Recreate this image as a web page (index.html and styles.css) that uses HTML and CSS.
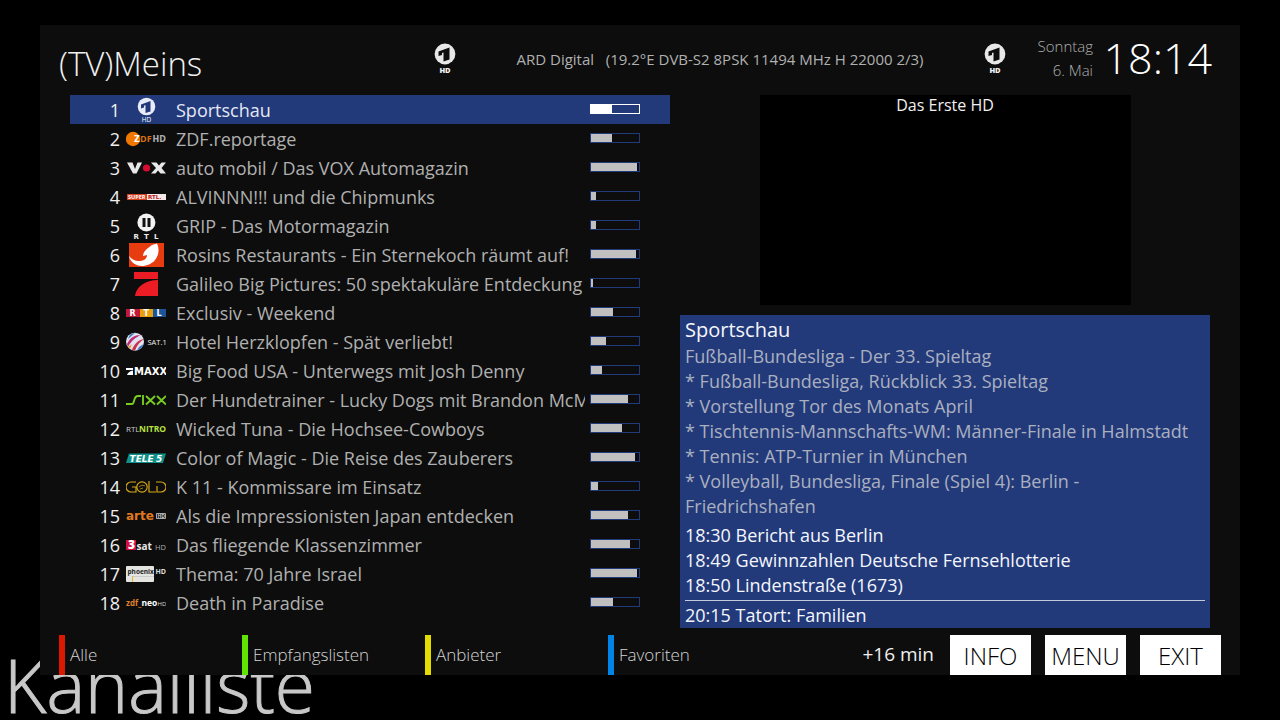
FILE: index.html
```html
<!DOCTYPE html>
<html lang="de">
<head>
<meta charset="utf-8">
<title>Kanalliste</title>
<link rel="stylesheet" href="styles.css">
</head>
<body>
<h1 class="backdrop-title">Kanalliste</h1>
<div class="screen">
  <header class="topbar">
    <h2 class="bouquet">(TV)Meins</h2>
    <svg class="station" viewBox="0 0 22 32" aria-hidden="true"><circle cx="11" cy="11" r="10.4" fill="#e8e8e8"/><path d="M4.500 8.500L15.500 4.500V16.500L9.500 18.500V9.500L8 10V12L4.500 13Z" fill="#0d0d0d"/><text x="11" y="29.500" text-anchor="middle" class="lt x" font-size="7.500" fill="#f0f0f0">HD</text></svg>
    <p class="tuner">ARD Digital &nbsp; (19.2°E DVB-S2 8PSK 11494 MHz H 22000 2/3)</p>
    <svg class="station" viewBox="0 0 22 32" aria-hidden="true"><circle cx="11" cy="11" r="10.4" fill="#e8e8e8"/><path d="M4.500 8.500L15.500 4.500V16.500L9.500 18.500V9.500L8 10V12L4.500 13Z" fill="#0d0d0d"/><text x="11" y="29.500" text-anchor="middle" class="lt x" font-size="7.500" fill="#f0f0f0">HD</text></svg>
    <p class="date">Sonntag<br>6. Mai</p>
    <time class="clock">18:14</time>
  </header>

  <main class="content">
    <ol class="channels">
      <li class="channel selected"><span class="num">1</span>
        <svg class="logo" viewBox="0 0 40 29"><circle cx="20.500" cy="11.500" r="8.800" fill="#e8ecf8"/><path d="M15 9.500L24.500 6V16.500L19.500 18V10L18 10.700V12.500L15 13.500Z" fill="#233a7a"/><text x="20.500" y="27" text-anchor="middle" class="lt" font-size="6.500" fill="#fff">HD</text></svg>
        <span class="name">Sportschau</span><span class="bar"><i style="width:44%"></i></span></li>
      <li class="channel"><span class="num">2</span>
        <svg class="logo" viewBox="0 0 40 29"><circle cx="7" cy="15" r="7.200" fill="#f07800"/><text x="8" y="18" class="wide" font-size="8" fill="#fff">Z</text><text x="14" y="18" class="lt b" font-size="9" fill="#d87010">DF</text><text x="26.500" y="18" class="wide" font-size="8" fill="#aaa">HD</text></svg>
        <span class="name">ZDF.reportage</span><span class="bar"><i style="width:44%"></i></span></li>
      <li class="channel"><span class="num">3</span>
        <svg class="logo" viewBox="0 0 40 29"><path d="M1 9.500H6.500L9 16L11.500 9.500H16L10.500 20.500H7Z" fill="#e8e8e8"/><circle cx="20.500" cy="15" r="3.600" fill="#d80c30"/><path d="M25 9.500H30.500L33 12.500L35.500 9.500H40L35.500 15L40 20.500H34.500L32 17.500L29.500 20.500H25L30 15Z" fill="#e8e8e8"/></svg>
        <span class="name">auto mobil / Das VOX Automagazin</span><span class="bar"><i style="width:96%"></i></span></li>
      <li class="channel"><span class="num">4</span>
        <svg class="logo" viewBox="0 0 40 29"><path d="M1 12H21V18H1Z" fill="#d84020"/><path d="M21 12H40V18H21Z" fill="#f4e8e8"/><text x="2" y="17" class="lt b" font-size="5.500" fill="#fff">SUPER</text><text x="22" y="17" class="wide" font-size="5.500" fill="#c01820">RTL.</text></svg>
        <span class="name">ALVINNN!!! und die Chipmunks</span><span class="bar"><i style="width:11%"></i></span></li>
      <li class="channel"><span class="num">5</span>
        <svg class="logo" viewBox="0 0 40 29"><circle cx="20.400" cy="11.500" r="9" fill="#f2f2f2"/><path d="M16.500 7H19.500V16H16.500ZM21.500 7H24.500V16H21.500Z" fill="#111"/><g class="wide" font-size="7" fill="#eee"><text x="7.500" y="28">R</text><text x="18" y="28">T</text><text x="28" y="28">L</text></g></svg>
        <span class="name">GRIP - Das Motormagazin</span><span class="bar"><i style="width:11%"></i></span></li>
      <li class="channel"><span class="num">6</span>
        <svg class="logo" viewBox="0 0 40 29"><path d="M3 3H38V27H3Z" fill="#e63c10"/><path d="M3 16C6 20 10 21.500 14 21C19 20.500 21 18 21 15L17 16C17 13 19 10 22 8L26 5L31 3.500C33.500 9 33 15 29 20C25 25 18 27 12 25.500C7 24 4 20.500 3 16Z" fill="#fff"/></svg>
        <span class="name">Rosins Restaurants - Ein Sternekoch räumt auf!</span><span class="bar"><i style="width:94%"></i></span></li>
      <li class="channel"><span class="num">7</span>
        <svg class="logo" viewBox="0 0 40 29"><path d="M8 3H32V10H8ZM32 11V27H9C10 18 19 11 32 11Z" fill="#ec1c24"/></svg>
        <span class="name">Galileo Big Pictures: 50 spektakuläre Entdeckung</span><span class="bar"><i style="width:4%"></i></span></li>
      <li class="channel"><span class="num">8</span>
        <svg class="logo" viewBox="0 0 40 29"><path d="M0 11H14V19H0Z" fill="#c01838"/><path d="M14 11H27V19H14Z" fill="#e8a010"/><path d="M27 11H40V19H27Z" fill="#1c5498"/><g class="wide" font-size="8" fill="#fff"><text x="3.500" y="18">R</text><text x="17.500" y="18">T</text><text x="30.500" y="18">L</text></g></svg>
        <span class="name">Exclusiv - Weekend</span><span class="bar"><i style="width:46%"></i></span></li>
      <li class="channel"><span class="num">9</span>
        <svg class="logo" viewBox="0 0 40 29"><circle cx="9" cy="14.700" r="9" fill="#dfe4ee"/><path d="M1 17C4 11 8 8 15 8C10 10 5 14 2 20Z" fill="#c02878"/><path d="M6 23C8 17 12 13 18 12C14 15 11 18 9 23.500Z" fill="#d03050"/><path d="M4 7.500L9 6L2 12ZM13 20L17.500 17C16 21 14 22 11 23.500Z" fill="#3c78c0"/><path d="M2 20L6 17L4 22Z" fill="#e8a030"/><text x="21.500" y="18" class="lt" font-size="7.500" fill="#eee">SAT.1</text></svg>
        <span class="name">Hotel Herzklopfen - Spät verliebt!</span><span class="bar"><i style="width:31%"></i></span></li>
      <li class="channel"><span class="num">10</span>
        <svg class="logo" viewBox="0 0 40 29"><path d="M0 12H7V14H0ZM7 14.500V19H1C2 16.500 4 15 7 14.500Z" fill="#fff"/><text x="8" y="19" class="wide" font-size="10" fill="#fff">MAXX</text></svg>
        <span class="name">Big Food USA - Unterwegs mit Josh Denny</span><span class="bar"><i style="width:23%"></i></span></li>
      <li class="channel"><span class="num">11</span>
        <svg class="logo" viewBox="0 0 40 29"><path d="M0 19H6C9 19 7 11 12 11H15M17 10V20M20 11L29 19.500M29 11L20 19.500M31 11L40 19.500M40 11L31 19.500" fill="none" stroke="#78cc20" stroke-width="1.900"/></svg>
        <span class="name">Der Hundetrainer - Lucky Dogs mit Brandon McMillan</span><span class="bar"><i style="width:77%"></i></span></li>
      <li class="channel"><span class="num">12</span>
        <svg class="logo" viewBox="0 0 40 29"><text x="0" y="18" class="lt" font-size="8" fill="#ccc">RTL</text><text x="13" y="18" class="lt b" font-size="8.500" fill="#b8e040">NITRO</text></svg>
        <span class="name">Wicked Tuna - Die Hochsee-Cowboys</span><span class="bar"><i style="width:65%"></i></span></li>
      <li class="channel"><span class="num">13</span>
        <svg class="logo" viewBox="0 0 40 29"><path d="M3 10.500H40L37 20H0Z" fill="#109088"/><text x="3.500" y="18.500" class="wide it" font-size="9" fill="#fff">TELE</text><text x="30" y="18.500" class="wide it" font-size="9" fill="#fff">5</text></svg>
        <span class="name">Color of Magic - Die Reise des Zauberers</span><span class="bar"><i style="width:92%"></i></span></li>
      <li class="channel"><span class="num">14</span>
        <svg class="logo" viewBox="0 0 40 29"><g fill="none" stroke="#d8a818" stroke-width="1.200"><path d="M10 10H5A5 5 0 0 0 5 20H10V15H6M23 9V20H30M30 10H35A5 5 0 0 1 35 20H31V14"/><circle cx="16" cy="15" r="5.200"/><path d="M13 15L16 13L19 14M14 17L17 16" stroke-width=".7"/></g></svg>
        <span class="name">K 11 - Kommissare im Einsatz</span><span class="bar"><i style="width:15%"></i></span></li>
      <li class="channel"><span class="num">15</span>
        <svg class="logo" viewBox="0 0 40 29"><text x="0" y="18.500" class="wide" font-size="12" fill="#e07820">arte</text><path d="M30.500 12.500H39.500V17.500H30.500Z" fill="#111" stroke="#aaa"/><text x="31.500" y="17" class="lt b" font-size="5" fill="#ccc">HD</text></svg>
        <span class="name">Als die Impressionisten Japan entdecken</span><span class="bar"><i style="width:77%"></i></span></li>
      <li class="channel"><span class="num">16</span>
        <svg class="logo" viewBox="0 0 40 29"><path d="M0 10H10V20H0Z" fill="#d01040"/><text x="2" y="19" class="lt x" font-size="12" fill="#fff">3</text><text x="10.500" y="20" class="lt b" font-size="10" fill="#e8e8e8">sat</text><text x="29" y="20" class="lt" font-size="7.500" fill="#aaa">HD</text></svg>
        <span class="name">Das fliegende Klassenzimmer</span><span class="bar"><i style="width:81%"></i></span></li>
      <li class="channel"><span class="num">17</span>
        <svg class="logo" viewBox="0 0 40 29"><rect y="7" width="28" height="16" rx="1" fill="#e4e4e0"/><text x="1.500" y="14.500" class="lt b" font-size="6.500" fill="#222">phoenix</text><path d="M6.500 17V23" stroke="#e8b030"/><path d="M7 17.500H28" stroke="#ccc"/><text x="29.500" y="14.500" class="lt b" font-size="7" fill="#ddd">HD</text></svg>
        <span class="name">Thema: 70 Jahre Israel</span><span class="bar"><i style="width:96%"></i></span></li>
      <li class="channel"><span class="num">18</span>
        <svg class="logo" viewBox="0 0 40 29"><text x="0" y="17.500" class="lt b" font-size="8" fill="#e08028">zdf_</text><text x="15.500" y="17.500" class="lt b" font-size="8.500" fill="#fff">neo</text><text x="31.500" y="17.500" class="lt" font-size="6" fill="#ddd">HD</text></svg>
        <span class="name">Death in Paradise</span><span class="bar"><i style="width:46%"></i></span></li>
    </ol>

    <div class="side">
      <div class="preview">Das Erste HD</div>
      <section class="epg">
        <h3 class="epg-title">Sportschau</h3>
        <p class="epg-text">Fußball-Bundesliga - Der 33. Spieltag<br>* Fußball-Bundesliga, Rückblick 33. Spieltag<br>* Vorstellung Tor des Monats April<br>* Tischtennis-Mannschafts-WM: Männer-Finale in Halmstadt<br>* Tennis: ATP-Turnier in München<br>* Volleyball, Bundesliga, Finale (Spiel 4): Berlin - Friedrichshafen</p>
        <ul class="upcoming">
          <li>18:30 Bericht aus Berlin</li>
          <li>18:49 Gewinnzahlen Deutsche Fernsehlotterie</li>
          <li>18:50 Lindenstraße (1673)</li>
        </ul>
        <p class="primetime">20:15 Tatort: Familien</p>
      </section>
    </div>
  </main>

  <footer class="keys">
    <div class="colors">
      <button class="color red">Alle</button>
      <button class="color green">Empfangslisten</button>
      <button class="color yellow">Anbieter</button>
      <button class="color blue">Favoriten</button>
    </div>
    <span class="remaining">+16 min</span>
    <div class="actions">
      <button class="action">INFO</button>
      <button class="action">MENU</button>
      <button class="action">EXIT</button>
    </div>
  </footer>
</div>
</body>
</html>
```
FILE: styles.css
```css
* { box-sizing: border-box; margin: 0; padding: 0; }

body {
  position: relative;
  min-height: 100vh;
  padding: 25px 40px 45px;
  background: #000;
  color: #b0b0b0;
  font-family: "Open Sans", "Noto Sans", sans-serif;
  font-size: 18px;
  overflow-x: hidden;
}

ol, ul { list-style: none; }
button { border: 0; font-family: inherit; cursor: pointer; }

/* Large page name, partly hidden behind the screen panel */
.backdrop-title {
  position: absolute;
  left: 4px;
  bottom: 0;
  color: #c8c8c8;
  font-size: 73px;
  font-weight: 300;
  line-height: 70px;
  -webkit-text-stroke: 1px #c8c8c8;
}

.screen { position: relative; background: #0d0d0d; }

.topbar {
  display: flex;
  height: 70px;
  padding: 0 28px 0 19px;
}
.bouquet {
  flex: 1;
  color: #f0f0f0;
  font-size: 33px;
  font-weight: 300;
  line-height: 78px;
  white-space: nowrap;
}
.station { flex: none; width: 22px; height: 32px; margin-top: 18px; }
.tuner {
  width: 528px;
  font-size: 15px;
  line-height: 69px;
  text-align: center;
  white-space: nowrap;
}
.date {
  width: 87px;
  padding-top: 9px;
  font-size: 15px;
  font-weight: 300;
  line-height: 24px;
  text-align: right;
}
.clock {
  width: 119px;
  color: #fff;
  font-size: 43px;
  font-weight: 300;
  line-height: 66px;
  text-align: right;
  white-space: nowrap;
}

.content {
  display: grid;
  grid-template-columns: 60fr 53fr;
  gap: 10px;
  padding: 0 30px 7px;
}

.channel {
  display: grid;
  grid-template-columns: 50px 40px 1fr 50px;
  align-items: center;
  height: 29px;
  padding-right: 30px;
}
.selected { background: #233a7a; color: #e4e8f4; }
.num, .name { padding-top: 2px; line-height: 27px; }
.num { color: #f0f0f0; text-align: right; }
.logo { width: 40px; height: 29px; margin-left: 6px; }
.name {
  margin: 0 5px 0 16px;
  white-space: nowrap;
  overflow: hidden;
}
.bar {
  align-self: start;
  height: 10px;
  margin-top: 9px;
  border: 1px solid #233a7a;
}
.bar i { display: block; height: 8px; background: #c0c0c0; }
.selected .bar { border-color: #fff; }
.selected .bar i { background: #fff; }

.lt { font-family: "Open Sans", sans-serif; }
.b { font-weight: 700; }
.x { font-weight: 800; }
.it { font-style: italic; }
.wide { font-family: "DejaVu Sans", sans-serif; font-weight: 700; }

.side { display: flex; flex-direction: column; gap: 10px; }
.preview {
  align-self: center;
  width: 70%;
  height: 210px;
  background: #000;
  color: #f0f0f0;
  font-size: 16px;
  line-height: 20px;
  text-align: center;
}
.epg {
  padding: 0 5px;
  background: #233a7a;
  color: #f4f6fc;
  line-height: 25px;
}
.epg-title { font-size: 20px; font-weight: 400; line-height: 29px; }
.epg-text { color: #aab0c0; }
.upcoming { padding: 4px 0 2px; }
.primetime { padding-top: 2px; border-top: 1px solid #c4cadc; }

.keys { display: flex; height: 40px; padding: 0 19px; }
.colors { display: grid; flex: 1; grid-template-columns: repeat(4, 183px); }
.color {
  padding: 0 0 2px 5px;
  border-left: 6px solid;
  background: none;
  color: #d4d4d4;
  font-size: 17px;
  font-weight: 300;
  text-align: left;
}
.red { border-color: #dc1800; }
.green { border-color: #60e400; }
.yellow { border-color: #e4dc00; }
.blue { border-color: #0084e8; }
.remaining { color: #f0f0f0; font-size: 19px; line-height: 39px; }
.actions { display: flex; gap: 14px; margin-left: 16px; }
.action {
  width: 81px;
  background: #fff;
  color: #000;
  font-size: 24px;
  font-weight: 300;
}
```
